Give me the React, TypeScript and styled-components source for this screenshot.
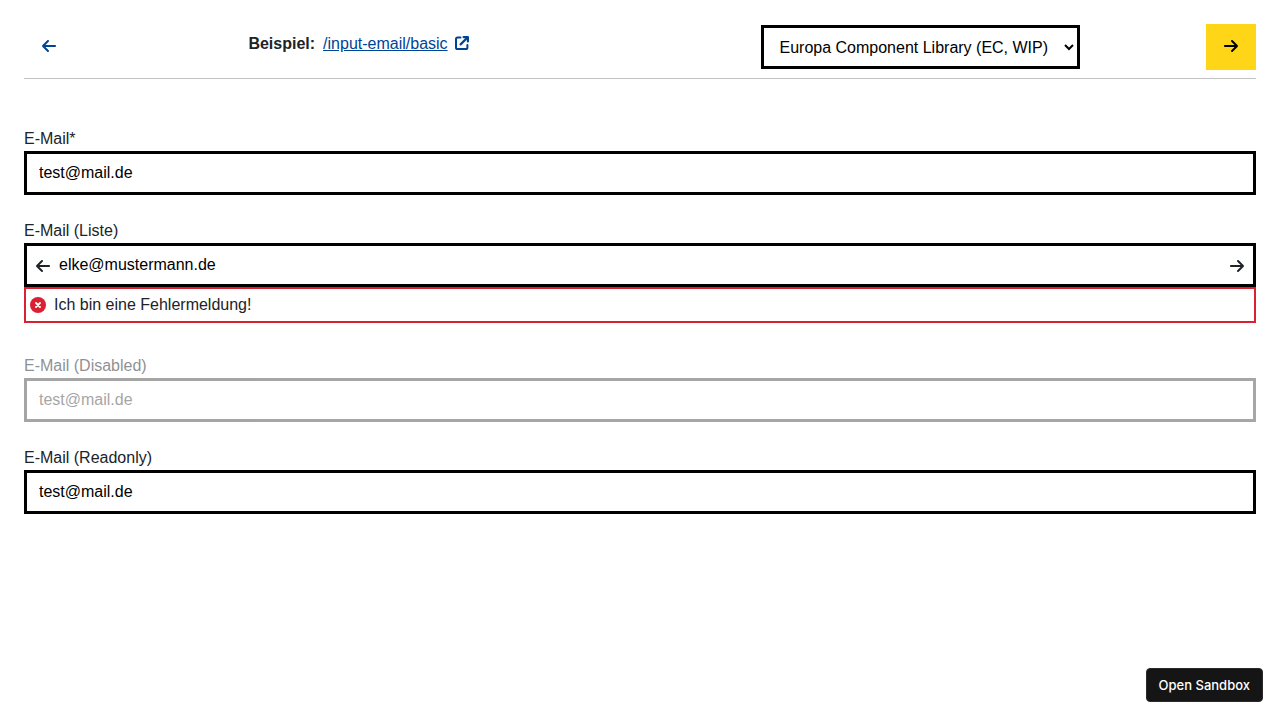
import React, { useId, useState } from 'react';
import styled, { createGlobalStyle } from 'styled-components';
import { FaArrowLeft, FaArrowRight } from 'react-icons/fa6';

const GlobalStyle = createGlobalStyle`
  *, *::before, *::after { box-sizing: border-box; }
  body {
    margin: 0;
    background: #fff;
    color: #202328;
    font: 16px/24px "Liberation Sans", Arial, sans-serif;
  }
`;

const Page = styled.div`
  padding: 24px;
`;

const Header = styled.header`
  display: grid;
  grid-template-columns: 50px 1fr 1fr 50px;
  justify-items: center;
  gap: 12px;
  padding-bottom: 8px;
  border-bottom: 1px solid #c3c3c3;
`;

const NavButton = styled.button<{ $primary?: boolean }>`
  display: flex;
  align-items: center;
  justify-content: center;
  width: 50px;
  height: 46px;
  padding: 0 0 2px;
  border: 0;
  font-size: 16px;
  cursor: pointer;
  background: ${(p) => (p.$primary ? '#ffd617' : 'transparent')};
  color: ${(p) => (p.$primary ? '#000' : '#004494')};
`;

const Example = styled.div`
  display: flex;
  gap: 8px;
  padding-top: 8px;
`;

const ExampleLink = styled.a`
  display: inline-flex;
  align-items: center;
  gap: 6px;
  height: 24px;
  color: #004494;
`;

const ThemeSelect = styled.select`
  align-self: center;
  height: 44px;
  padding: 0 12px;
  border: 3px solid #000;
  border-radius: 0;
  background: #fff;
  color: #000;
  font: inherit;
`;

const Form = styled.main`
  display: grid;
  gap: 24px;
  padding-top: 48px;
`;

const FieldGroup = styled.div<{ $disabled?: boolean; $spaced?: boolean }>`
  display: flex;
  flex-direction: column;
  opacity: ${(p) => (p.$disabled ? 0.5 : 1)};
  padding-bottom: ${(p) => (p.$spaced ? 7 : 0)}px;
`;

const InputFrame = styled.div<{ $muted?: boolean; $icons?: boolean }>`
  display: flex;
  align-items: center;
  gap: 8px;
  height: 44px;
  border: 3px solid ${(p) => (p.$muted ? '#4d4d4d' : '#000')};
  padding: 2px ${(p) => (p.$icons ? 8 : 12)}px 0;

  svg { flex: none; width: 16px; }
`;

const TextInput = styled.input`
  flex: 1;
  min-width: 0;
  height: 36px;
  padding: 0 0 2px;
  border: 0;
  outline: 0;
  background: transparent;
  color: #000;
  font: inherit;

  &:disabled { color: #4d4d4d; }
`;

const ErrorMessage = styled.div`
  display: flex;
  align-items: center;
  gap: 8px;
  height: 36px;
  padding: 0 4px;
  border: 2px solid #da2131;
`;

const SandboxButton = styled.button`
  position: fixed;
  right: 17px;
  bottom: 18px;
  height: 34px;
  padding: 0 12px;
  border: 1px solid #2a2a2a;
  border-radius: 4px;
  background: #151515;
  color: #fff;
  font: 500 13px/16px Inter, sans-serif;
  cursor: pointer;
`;

function ExternalIcon() {
  return (
    <svg width="18" height="16" viewBox="-1 0 18 16" fill="none" stroke="currentColor" aria-hidden>
      <path
        d="M5.5 1.6H2.6Q1 1.6 1 3.2v8.2Q1 13 2.6 13h8.2q1.6 0 1.6-1.6V9"
        strokeWidth="2"
        strokeLinecap="round"
      />
      <path d="M5.6 8.4 12.2 1.8" strokeWidth="2.2" strokeLinecap="round" />
      <path d="M8.6 1.1H12.9V5.4" strokeWidth="2.2" strokeLinecap="round" strokeLinejoin="round" />
    </svg>
  );
}

function ErrorIcon() {
  return (
    <svg width="16" height="16" viewBox="0 0 16 16" aria-hidden>
      <circle cx="8" cy="8" r="8" fill="#da2131" />
      <path d="m6 6 4 4m0-4-4 4" stroke="#fff" strokeWidth="1.8" strokeLinecap="round" />
    </svg>
  );
}

interface EmailFieldProps {
  label: string;
  initial: string;
  required?: boolean;
  disabled?: boolean;
  readOnly?: boolean;
  icons?: boolean;
  error?: string;
}

function EmailField({ label, initial, required, disabled, readOnly, icons, error }: EmailFieldProps) {
  const id = useId();
  const [value, setValue] = useState(initial);
  return (
    <FieldGroup $disabled={disabled} $spaced={Boolean(error)}>
      <label htmlFor={id}>{label}{required && '*'}</label>
      <InputFrame $icons={icons} $muted={disabled}>
        {icons && <FaArrowLeft aria-hidden />}
        <TextInput
          id={id}
          type="email"
          value={value}
          required={required}
          disabled={disabled}
          readOnly={readOnly}
          aria-invalid={Boolean(error)}
          aria-describedby={error ? `${id}-error` : undefined}
          onChange={(e) => setValue(e.target.value)}
        />
        {icons && <FaArrowRight aria-hidden />}
      </InputFrame>
      {error && (
        <ErrorMessage id={`${id}-error`} role="alert">
          <ErrorIcon />
          <span>{error}</span>
        </ErrorMessage>
      )}
    </FieldGroup>
  );
}

export default function App() {
  return (
    <Page>
      <GlobalStyle />
      <Header>
        <NavButton type="button" aria-label="Vorheriges Beispiel"><FaArrowLeft /></NavButton>
        <Example>
          <strong>Beispiel:</strong>
          <ExampleLink href="#/input-email/basic">
            /input-email/basic
            <ExternalIcon />
          </ExampleLink>
        </Example>
        <ThemeSelect aria-label="Theme" defaultValue="ec">
          <option value="ec">Europa Component Library (EC, WIP)</option>
        </ThemeSelect>
        <NavButton type="button" $primary aria-label="Nächstes Beispiel"><FaArrowRight /></NavButton>
      </Header>
      <Form>
        <EmailField label="E-Mail" initial="test@mail.de" required />
        <EmailField label="E-Mail (Liste)" initial="elke@mustermann.de" icons error="Ich bin eine Fehlermeldung!" />
        <EmailField label="E-Mail (Disabled)" initial="test@mail.de" disabled />
        <EmailField label="E-Mail (Readonly)" initial="test@mail.de" readOnly />
      </Form>
      <SandboxButton type="button">Open Sandbox</SandboxButton>
    </Page>
  );
}
